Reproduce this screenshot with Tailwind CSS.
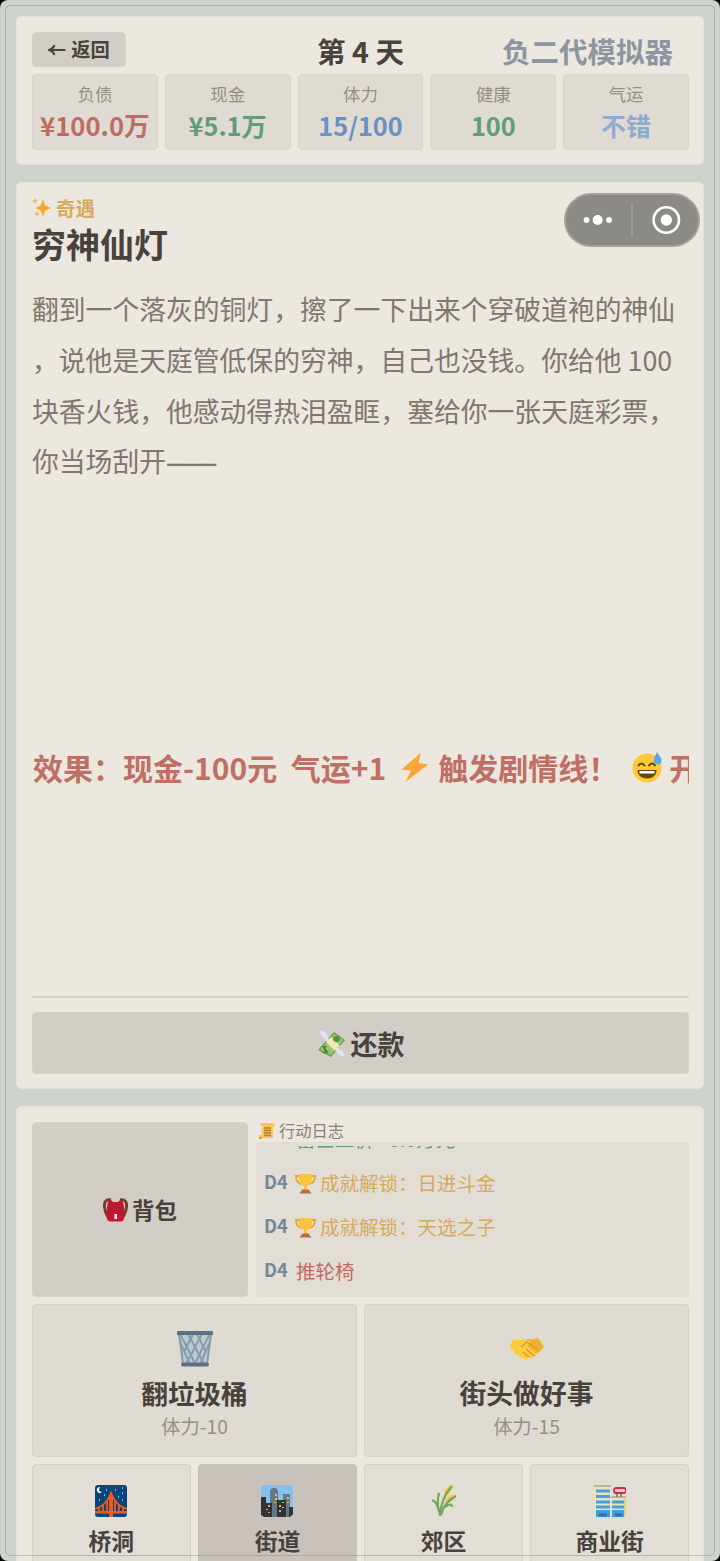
<!DOCTYPE html>
<html lang="zh-CN">
<head>
<meta charset="utf-8">
<title>负二代模拟器</title>
<script src="https://cdn.jsdelivr.net/npm/@tailwindcss/browser@4"></script>
</head>
<body class="bg-black">
<div class="relative flex h-[1561px] w-[720px] flex-col gap-[17px] overflow-hidden rounded-[8px] bg-[#cdd3cd] px-[16px] pt-[16px] font-['Noto_Sans_CJK_SC',sans-serif] text-[#49423c]">

  <header class="h-[149px] shrink-0 rounded-[5px] border border-[#e6e0d7] bg-[#ece7df] pl-[15px] pr-[14px] pt-[15px]">
    <div class="relative flex h-[36px] items-start justify-between">
      <button class="flex h-[35px] w-[94px] items-center justify-center gap-[5px] rounded-[4px] border border-[#d7d1ca] bg-[#d2cdc6] text-[19.300px] font-bold leading-none">
        <svg class="h-[12px] w-[18px]" viewBox="0 0 18 12" fill="none" stroke="currentColor" stroke-width="2.1"><path d="M17.500 6H2M6.500 1.200C5.500 3.800 3.800 5.300 1.200 6c2.600.7 4.300 2.200 5.300 4.800"/></svg>
        <span>返回</span>
      </button>
      <h1 class="absolute inset-x-0 text-center text-[28.600px] font-bold leading-[37px]">第 4 天</h1>
      <div class="pr-[16px] text-[28.500px] font-bold leading-[37px] text-[#8c96a1]">负二代模拟器</div>
    </div>
    <div class="mt-[6px] grid grid-cols-5 gap-[7px]">
      <div class="flex h-[76px] flex-col items-center rounded-[4px] border border-[#d8d3cb] bg-[#dfdad2]"><span class="mt-[6px] text-[17.500px] leading-[26px] text-[#978d87]">负债</span><b class="whitespace-nowrap text-[25.700px] leading-[36px] text-[#bf6c66]">¥100.0万</b></div>
      <div class="flex h-[76px] flex-col items-center rounded-[4px] border border-[#d8d3cb] bg-[#dfdad2]"><span class="mt-[6px] text-[17.500px] leading-[26px] text-[#978d87]">现金</span><b class="whitespace-nowrap text-[25.300px] leading-[36px] text-[#629b7e]">¥5.1万</b></div>
      <div class="flex h-[76px] flex-col items-center rounded-[4px] border border-[#d8d3cb] bg-[#dfdad2]"><span class="mt-[6px] text-[17.500px] leading-[26px] text-[#978d87]">体力</span><b class="whitespace-nowrap text-[25.300px] leading-[36px] text-[#6792c2]">15/100</b></div>
      <div class="flex h-[76px] flex-col items-center rounded-[4px] border border-[#d8d3cb] bg-[#dfdad2]"><span class="mt-[6px] text-[17.500px] leading-[26px] text-[#978d87]">健康</span><b class="whitespace-nowrap text-[25.300px] leading-[36px] text-[#629b7e]">100</b></div>
      <div class="flex h-[76px] flex-col items-center rounded-[4px] border border-[#d8d3cb] bg-[#dfdad2]"><span class="mt-[6px] text-[17.500px] leading-[26px] text-[#978d87]">气运</span><b class="whitespace-nowrap text-[25px] leading-[36px] text-[#8fabd0]">不错</b></div>
    </div>
  </header>

  <main class="relative flex h-[907px] shrink-0 flex-col rounded-[5px] border border-[#e6e0d7] bg-[#ece7df] pl-[15px] pr-[14px]">
    <div class="mt-[11px] flex h-[28px] items-center gap-[4px] text-[19.500px] font-bold text-[#d6ab5e]">
      <svg class="h-[20px] w-[20px]" viewBox="0 0 20 20"><path fill="#fda62b" d="M11 1.500l2.200 6L19 10l-5.800 2.500-2.200 6-2.200-6L3 10l5.800-2.500z"/><path fill="#efba62" d="M3 0l.9 2.100L6 3l-2.100.9L3 6l-.9-2.100L0 3l2.100-.9zM5 13l.9 2.100L8 16l-2.100.9L5 19l-.9-2.100L2 16l2.100-.9z"/></svg>
      <span>奇遇</span>
    </div>
    <h2 class="text-[34px] font-bold leading-[43px]">穷神仙灯</h2>
    <p class="mt-[19px] whitespace-nowrap text-[26.800px] leading-[50.800px] text-[#82766e]">翻到一个落灰的铜灯，擦了一下出来个穿破道袍的神仙<br>，说他是天庭管低保的穷神，自己也没钱。你给他 100<br>块香火钱，他感动得热泪盈眶，塞给你一张天庭彩票，<br>你当场刮开<span class="font-['Noto_Sans'] tracking-[-2.400px]">——</span></p>
    <div class="mt-[254px] flex h-[50px] items-center overflow-hidden whitespace-pre text-[30px] font-bold leading-[50px] text-[#be7067]"><span class="shrink-0 pl-[1px]">效果：现金-100元  气运+1</span>
      <svg class="ml-[14px] h-[32px] w-[30px] shrink-0" viewBox="0 0 30 32"><path fill="#fca735" d="M21 1.500L1.500 18.500l9.500 1L5.500 31 28 13.500l-9.500-1.500z"/></svg><span class="ml-[8px] shrink-0">触发剧情线！</span><svg class="ml-[13px] h-[32px] w-[32px] shrink-0" viewBox="0 0 32 32"><circle cx="16" cy="17" r="14.500" fill="#fdc936"/><path d="M7.500 14.500q3-4 6 0M18 14.500q3-4 6 0" stroke="#66480b" stroke-width="2" fill="none" stroke-linecap="round"/><path d="M6.500 19h19c0 5.500-4 8.500-9.500 8.500S6.500 24.500 6.500 19z" fill="#674812"/><path d="M8.500 20h15v2.500h-15z" fill="#fff"/><path d="M26 1c2.500 4 4.500 6 4.500 8.500a4 4 0 0 1-8 0C22.500 7 24.500 5 26 1z" fill="#5aa9e6"/></svg><span class="ml-[6px] shrink-0">开</span></div>
    <div class="absolute bottom-[14px] left-[15px] right-[14px] border-t-2 border-[#d9cfc8] pt-[14px]">
      <button class="flex h-[62px] w-full items-center justify-center gap-[5px] rounded-[4px] border border-[#d7d1ca] bg-[#d2cdc6] pt-[3px] text-[27px] font-bold">
        <svg class="h-[28px] w-[29px]" viewBox="0 0 29 28"><path fill="#68a54c" d="M1 19L17 1l11 8-14 17z"/><path fill="#9ac973" d="M3.500 18.500L17 3l9 6-12 15z"/><path fill="#f3e7b1" d="M9 11l5-5 9 9-5 5z"/><ellipse cx="19.500" cy="8" rx="3.500" ry="3" fill="#509342"/><path fill="#dfe5f5" d="M2 0c6-1 9 4 10 9-2 3-4 0-4-2-3 0-3-2-3-4-3 0-2-2-3-3zM28 26c-6-1-9-4-9-8 1-3 3-1 4 1 3 0 3 2 3 3 2 1 2 3 2 4z"/><path d="M10 16c-3-1-4 1-2 3s0 4-2 2m0-6l5 7" stroke="#377d34" stroke-width="1.200" fill="none"/></svg>
        <span>还款</span>
      </button>
    </div>
    <div class="absolute right-[3px] top-[10px] flex h-[54px] w-[136px] items-center rounded-full border-2 border-[#a5a29d] bg-[#8c8a84]">
      <svg class="h-full w-full" viewBox="0 0 132 50" fill="#fff"><circle cx="20.500" cy="25" r="2.900"/><circle cx="31.700" cy="25" r="5"/><circle cx="43" cy="25" r="2.900"/><path d="M66 8v34" stroke="#a19f9b" stroke-width="1.500"/><circle cx="100.300" cy="25" r="12.700" fill="none" stroke="#fff" stroke-width="2.600"/><circle cx="100.300" cy="25" r="5.700"/></svg>
    </div>
  </main>

  <section class="h-[560px] shrink-0 rounded-t-[5px] border border-[#e6e0d7] bg-[#ece7df] pl-[15px] pr-[14px] pt-[15px]">
    <div class="flex h-[175px] gap-[8px]">
      <button class="flex w-[216px] items-center justify-center gap-[4px] rounded-[4px] border border-[#d7d1ca] bg-[#d2cdc6] text-[22.500px] font-bold">
        <svg class="h-[24px] w-[25px]" viewBox="0 0 25 24"><path d="M8 2C3 1 1 4 1.500 9s2 7 3.500 10M17 2c5-1 7 2 6.500 7s-2 7-3.500 10" fill="none" stroke="#733c36" stroke-width="3"/><path fill="#c5162e" d="M7 1l3 3h5l3-3 2 3 1 5v11q0 3.500-4 3.500H8q-4 0-4-3.500V9l1-5z"/><path d="M8.500 6v9M16.500 6v9" stroke="#94283b" stroke-width="1.500"/><path fill="#fff" d="M11.500 16h2.500v5h-2.500z"/></svg>
        <span>背包</span>
      </button>
      <div class="flex-1">
        <div class="flex h-[20px] items-center gap-[4px] pb-[3px] pl-[3px] text-[16.300px] leading-[17px] text-[#8a807a]">
          <svg class="h-[17px] w-[16px]" viewBox="0 0 16 17"><path fill="#f9c758" d="M2 1h13l1 4h-2v11H1l-1-3h3V4H1z"/><path d="M5 6h7M5 8.500h7M5 11h7M5 13.500h7" stroke="#b97831" stroke-width="1.400"/><path d="M0 16h3" stroke="#d99032" stroke-width="2"/></svg>
          <span>行动日志</span>
        </div>
        <div class="h-[155px] rounded-[4px] border border-[#e1dcd4] bg-[#e2ddd5] px-[7px] pt-[3px]">
          <div class="flex h-[150px] flex-col justify-end overflow-hidden pb-[3px] text-[19.500px]">
            <div class="flex h-[44px] shrink-0 items-center pl-[32px] text-[#629b7e]">富士工价 +5.0万元</div>
            <div class="flex h-[44px] shrink-0 items-center text-[#d6ab5e]"><b class="w-[31px] pb-[2px] text-[18.200px] text-[#768797]">D4</b><svg class="mr-[4px] h-[21px] w-[21px]" viewBox="0 0 21 21"><path d="M5 3H1c0 5 2 7 5 8M16 3h4c0 5-2 7-5 8" fill="none" stroke="#e8a62b" stroke-width="1.800"/><path fill="#fdc33b" d="M4 1h13c0 8-1 11-5 12v4H9v-4C5 12 4 9 4 1z"/><path fill="#b66c47" d="M7.500 16.500h6l3 4h-12z"/></svg><span>成就解锁：日进斗金</span></div>
            <div class="flex h-[44px] shrink-0 items-center text-[#d6ab5e]"><b class="w-[31px] pb-[2px] text-[18.200px] text-[#768797]">D4</b><svg class="mr-[4px] h-[21px] w-[21px]" viewBox="0 0 21 21"><path d="M5 3H1c0 5 2 7 5 8M16 3h4c0 5-2 7-5 8" fill="none" stroke="#e8a62b" stroke-width="1.800"/><path fill="#fdc33b" d="M4 1h13c0 8-1 11-5 12v4H9v-4C5 12 4 9 4 1z"/><path fill="#b66c47" d="M7.500 16.500h6l3 4h-12z"/></svg><span>成就解锁：天选之子</span></div>
            <div class="flex h-[44px] shrink-0 items-center text-[#bf6c66]"><b class="w-[32px] pb-[2px] text-[18.200px] text-[#768797]">D4</b><span>推轮椅</span></div>
          </div>
        </div>
      </div>
    </div>

    <div class="mt-[7px] grid grid-cols-2 gap-[7px]">
      <button class="flex h-[153px] flex-col items-center rounded-[4px] border border-[#d5d0c8] bg-[#dfdad2]">
        <svg class="mt-[25px] h-[37px] w-[36px]" viewBox="0 0 36 37"><path fill="#c1c9cb" d="M2 4h32l-4 30H6z"/><path d="M3 4l8 15 7 15M11 4l8 15 8 15M20 4l9 18M3 12l10 22M33 4l-8 15-7 15M25 4l-8 15-8 15M16 4L7 22M33 12L23 34" fill="none" stroke="#829db2" stroke-width="2"/><path d="M2 4l4 30M34 4l-4 30" stroke="#829db2" stroke-width="2"/><path d="M1.500 3h33M6 34.500h24" stroke="#5c707e" stroke-width="4" stroke-linecap="round"/></svg>
        <b class="mt-[7px] text-[26.600px] leading-[38px]">翻垃圾桶</b>
        <span class="text-[19.300px] leading-[28px] text-[#978d87]">体力-10</span>
      </button>
      <button class="flex h-[153px] flex-col items-center rounded-[4px] border border-[#d5d0c8] bg-[#dfdad2]">
        <svg class="mt-[25px] h-[37px] w-[36px]" viewBox="0 0 36 37"><path fill="#f0b12e" d="M14 11l5-2 5 0 5-1 6 9-5 5-5 3-8-1z"/><path fill="#fdcb3f" d="M4 10l8 0 5-1 5 3-4 4 9 7c2 3-1 4-3 3 0 3-3 3-5 1 0 3-3 3-5 1-3 1-4-1-5-3-3 0-4-2-4-4-3-1-4-4-4-6z"/><path d="M12 17l6-5 10 7M17 19l8 7M14 22l6 5" fill="none" stroke="#d79225" stroke-width="1.100"/></svg>
        <b class="mt-[7px] text-[26.800px] leading-[38px]">街头做好事</b>
        <span class="text-[19.300px] leading-[28px] text-[#978d87]">体力-15</span>
      </button>
    </div>

    <div class="mt-[7px] grid grid-cols-4 gap-[7.500px]">
      <button class="flex h-[140px] flex-col items-center rounded-[4px] border border-[#d5d0c8] bg-[#e2ddd5]">
        <svg class="mt-[20px] h-[32px] w-[32px]" viewBox="0 0 32 32"><rect width="32" height="32" rx="3" fill="#08457a"/><path d="M5 2a3 3 0 1 0 2 5C3 7 4 4 5 2z" fill="#fff"/><path d="M11 5h1M20 5h1M27 3h1M27 8h1M4 15h1M27 15h1M9 10h1M23 12h1" stroke="#b7dae8" stroke-width="1.500"/><path d="M16 7v25M0 27h32M0 24q11-3 16-16 5 13 16 16M4 23v4M8 20v7M12 16v11M20 16v11M24 20v7M28 23v4" fill="none" stroke="#f25a1b" stroke-width="1.800"/><path d="M14 10h4v22h-4M0 26h32v2.500H0" fill="#f25a1b"/></svg>
        <b class="mt-[7px] text-[22.800px] leading-[34px]">桥洞</b>
      </button>
      <button class="flex h-[140px] flex-col items-center rounded-[4px] border border-[#c7c0b9] bg-[#c9c1bb]">
        <svg class="mt-[20px] h-[32px] w-[32px]" viewBox="0 0 32 32"><rect width="32" height="32" rx="3" fill="#85c1ef"/><path fill="#657887" d="M9 32V6l2-3h4l2 3v26zM22 32V9h7v23z"/><path fill="#303437" d="M0 12h5v6h6v14H3l-3-2zM16 15h9v17h-9zM28 22h4v7l-3 3h-1z"/><path d="M8 20v2M6 24v1M8 27v1M15 9v2M15 13v2M14 17v1M22 17v1M19 20v2M22 22v1M19 25v2M27 12v2M27 17v1" stroke="#f2c45a" stroke-width="1.800"/></svg>
        <b class="mt-[7px] text-[22.800px] leading-[34px]">街道</b>
      </button>
      <button class="flex h-[140px] flex-col items-center rounded-[4px] border border-[#d5d0c8] bg-[#e2ddd5]">
        <svg class="mt-[20px] h-[32px] w-[32px]" viewBox="0 0 32 32"><path fill="#f5c652" d="M24 0c1 7-4 10-8 13-1-7 2-12 8-13zM28 10c-2 6-6 8-11 9 1-6 5-10 11-9z"/><path d="M12 31Q13 13 24 1M13 30Q16 17 28 11M12 30Q10 17 4 15M12 29Q8 20 11 8M17 22q7-5 7 0" fill="none" stroke="#72a85b" stroke-width="2.200"/></svg>
        <b class="mt-[7px] text-[22.800px] leading-[34px]">郊区</b>
      </button>
      <button class="flex h-[140px] flex-col items-center rounded-[4px] border border-[#d5d0c8] bg-[#e2ddd5]">
        <svg class="mt-[20px] h-[32px] w-[32px]" viewBox="0 0 32 32"><path fill="#e8e2bd" d="M0 1h17v31H0zM17 12h15v20H17z"/><path fill="#b8b59e" d="M0 0h17v2H0zM17 11h15v2H17z"/><path d="M2 6h14M2 11.500h14M2 17h14M2 22h14M18 17h12M18 22h12" stroke="#4b9edc" stroke-width="3"/><path fill="#429be4" d="M2 25h14v7H2zM18 25h12v7H18z"/><path d="M5 30h8M21 30h7" stroke="#2e71b6" stroke-width="3"/><path d="M23 7v5M27 7v5" stroke="#69717a" stroke-width="1.500"/><rect x="20" y="3" width="12" height="5" rx="2" fill="#f5bfc5" stroke="#c92c43" stroke-width="1.800"/><path d="M31 14v18" stroke="#eec85b" stroke-width="1.500"/></svg>
        <b class="mt-[7px] text-[22.800px] leading-[34px]">商业街</b>
      </button>
    </div>
  </section>

  <div class="pointer-events-none absolute inset-[5px] rounded-[5px] border border-[#7a817c]/40"></div>
</div>
</body>
</html>
